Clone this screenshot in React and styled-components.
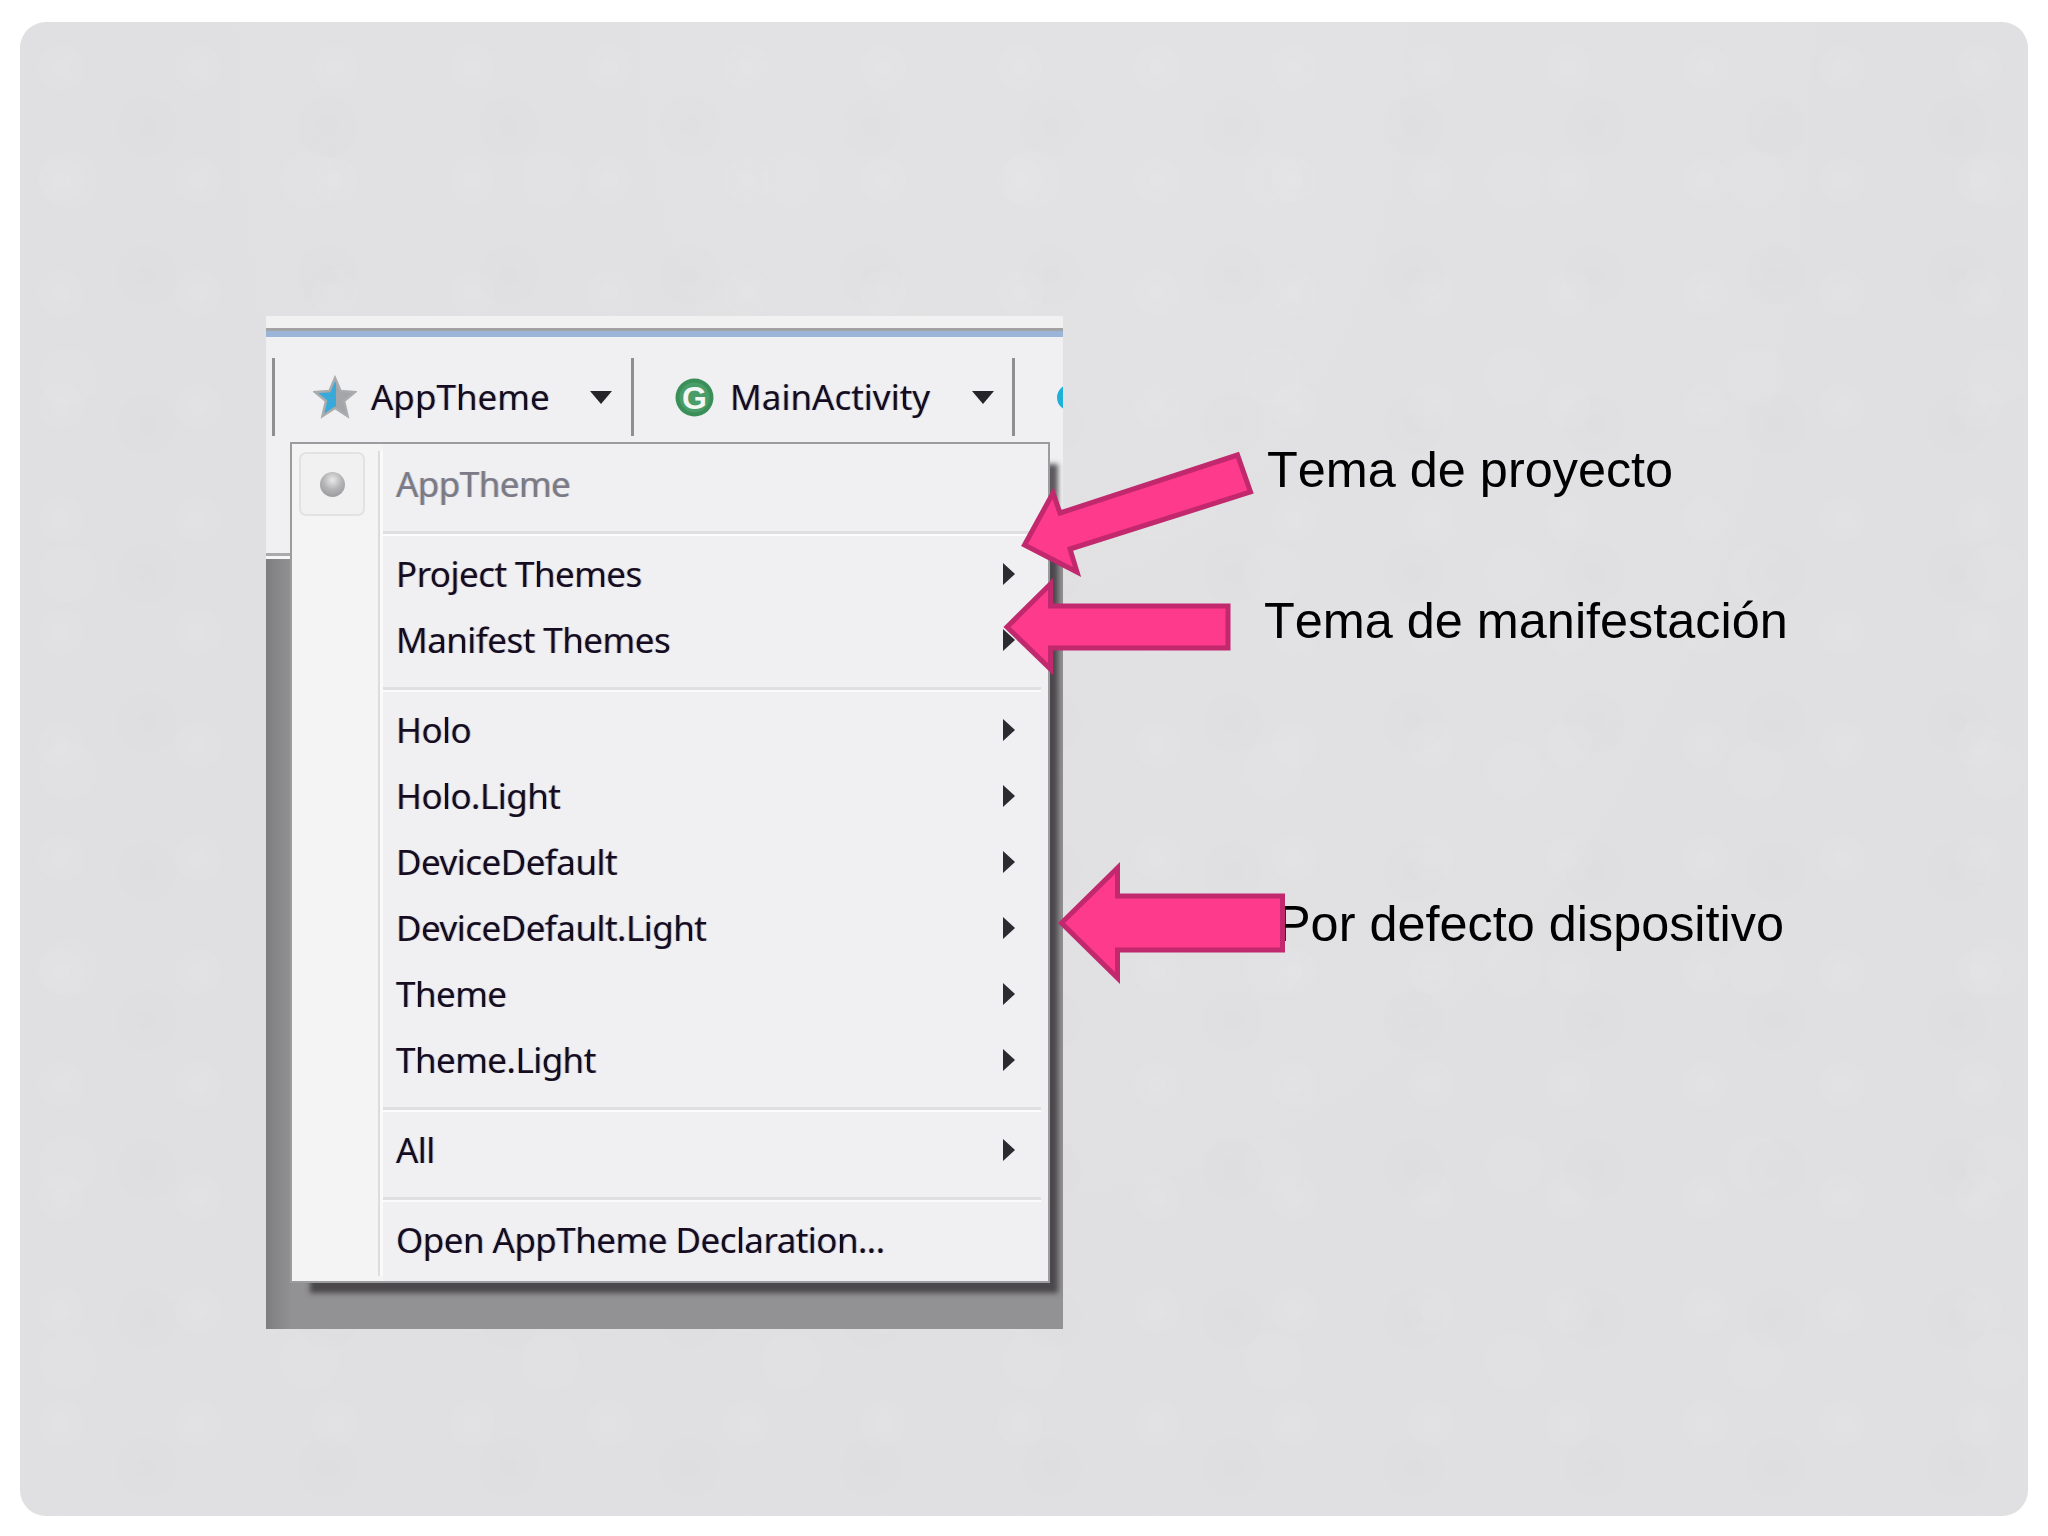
import React from "react";
import styled, { createGlobalStyle } from "styled-components";

const Global = createGlobalStyle`
  html, body { margin: 0; padding: 0; background: #fff; }
  #root { width: 2048px; height: 1536px; padding: 22px 20px 20px; box-sizing: border-box; }
`;

const Card = styled.main`
  position: relative;
  display: flex;
  align-items: flex-start;
  height: 100%;
  box-sizing: border-box;
  padding: 294px 0 0 246px;
  border-radius: 26px;
  overflow: hidden;
  background-color: #e0e0e2;
  background-image:
    radial-gradient(circle at 30% 40%, rgba(255,255,255,.07), transparent 30px),
    radial-gradient(circle at 70% 70%, rgba(0,0,0,.008), transparent 40px),
    radial-gradient(circle at 20% 80%, rgba(255,255,255,.05), transparent 44px),
    radial-gradient(ellipse at 50% 0%, rgba(255,255,255,.08), transparent 70%);
  background-size: 137px 113px, 181px 149px, 241px 197px, 100% 100%;
`;

const Shot = styled.section`
  width: 797px;
  height: 1013px;
  flex-shrink: 0;
  overflow: hidden;
  font-family: "Noto Sans", "Open Sans", sans-serif;
  background:
    linear-gradient(to bottom,
      #f1f1f2 0 12px, #a2a2a4 12px 15px, #9ab5d8 15px 21px,
      #f0f0f2 21px 237px, #aaaaac 237px 240px, #f6f6f6 240px 243px, transparent 243px),
    linear-gradient(to right, #7e7e80, #929193 26px);
`;

const Toolbar = styled.div`
  display: flex;
  align-items: center;
  height: 78px;
  margin-top: 42px;
  padding: 0 0 6px 6px;
`;

const ToolSep = styled.span`
  flex-shrink: 0;
  width: 3px;
  height: 78px;
  background: #8f8f90;
`;

const ToolItem = styled.div`
  display: flex;
  align-items: center;
  flex-shrink: 0;
  box-sizing: border-box;
  width: ${(p) => p.$width}px;
  padding-left: ${(p) => p.$inset}px;
  gap: ${(p) => p.$gap}px;
`;

const fringe = `
  text-shadow: -1px 0 0 rgba(232, 150, 40, .38), 1px 0 0 rgba(40, 140, 240, .42);
  filter: blur(.35px);
`;

const ToolLabel = styled.span`
  font-size: 35px;
  line-height: 44px;
  white-space: nowrap;
  color: #160c22;
  ${fringe}
`;

const Caret = styled.span`
  margin-left: auto;
  margin-right: ${(p) => p.$right}px;
  width: 0;
  height: 0;
  border-left: 11px solid transparent;
  border-right: 11px solid transparent;
  border-top: 13px solid #25252a;
`;

const Peek = styled.span`
  flex-shrink: 0;
  width: 28px;
  height: 27px;
  margin-left: 42px;
  border-radius: 50%;
  background: #1fb0da;
  filter: blur(.6px);
`;

const Menu = styled.nav`
  display: flex;
  box-sizing: border-box;
  width: 760px;
  height: 841px;
  margin-left: 24px;
  border: 2px solid #9c9c9e;
  background: #f4f4f5;
  box-shadow: 14px 16px 5px -6px rgba(58, 56, 60, .82);
`;

const Gutter = styled.div`
  flex-shrink: 0;
  width: 86px;
  box-sizing: border-box;
  padding: 8px 0 0 7px;
`;

const RadioBox = styled.div`
  display: flex;
  align-items: center;
  justify-content: center;
  box-sizing: border-box;
  width: 66px;
  height: 64px;
  border: 2px solid #e2e2e3;
  border-radius: 7px;
  background: #f1f1f2;
`;

const RadioDot = styled.span`
  width: 25px;
  height: 25px;
  border-radius: 50%;
  background: radial-gradient(circle at 50% 32%, #e9e9e9 0, #b4b4b6 45%, #8f8f92 100%);
`;

const GutterRule = styled.span`
  flex-shrink: 0;
  width: 3px;
  margin: 7px 0 5px;
  border-left: 2px solid #dcdcde;
  background: #fafafa;
`;

const Pane = styled.div`
  flex: 1;
  box-sizing: border-box;
  padding: 7px 0 0;
  background: #f0eff2;
`;

const Row = styled.div`
  display: flex;
  align-items: center;
  justify-content: space-between;
  height: 66px;
  padding: 0 33px 0 13px;
`;

const RowLabel = styled.span`
  font-size: 35px;
  line-height: 44px;
  letter-spacing: -.55px;
  white-space: nowrap;
  color: ${(p) => (p.$muted ? "#7d7a88" : "#160c22")};
  ${fringe}
`;

const SubArrow = styled.span`
  width: 0;
  height: 0;
  border-top: 11px solid transparent;
  border-bottom: 11px solid transparent;
  border-left: 12px solid #2a2a30;
`;

const Divider = styled.div`
  height: 3px;
  margin: 14px 7px 5px 0;
  background: #dfdfe1;
  border-bottom: 2px solid #fbfbfc;
`;

const Notes = styled.div`
  display: flex;
  flex-direction: column;
  align-items: flex-start;
`;

const Note = styled.p`
  margin: ${(p) => p.$top}px 0 0 ${(p) => p.$left}px;
  font-family: "Liberation Sans", Arial, sans-serif;
  font-size: 50.4px;
  font-kerning: none;
  line-height: 60px;
  white-space: nowrap;
  color: #000;
`;

const ArrowSvg = styled.svg`
  position: absolute;
  left: 0;
  top: 0;
  pointer-events: none;
`;

const Pointer = ({ points }) => (
  <polygon points={points} fill="#fd3a8b" stroke="#c1286d" strokeWidth="5" strokeLinejoin="miter" strokeMiterlimit="6" />
);

const StarIcon = () => (
  <svg width="44" height="44" viewBox="0 0 44 44">
    <defs>
      <linearGradient id="starFill" x1="0" x2="1" y1="0" y2="0">
        <stop offset="0.52" stopColor="#38a9d9" />
        <stop offset="0.52" stopColor="#a3a5a8" />
      </linearGradient>
    </defs>
    <polygon
      points="22,3 27.5,16 42,17 31,26 34.5,41 22,33 9.5,41 13,26 2,17 16.5,16"
      fill="url(#starFill)"
      stroke="#a9abad"
      strokeWidth="2.5"
    />
  </svg>
);

const ClassIcon = () => (
  <svg width="39" height="39" viewBox="0 0 39 39">
    <circle cx="19.5" cy="19.5" r="19" fill="#3a8f58" />
    <circle cx="19.5" cy="19.5" r="15" fill="#4a9d68" />
    <text x="19.5" y="31" textAnchor="middle" fontFamily="Liberation Sans" fontWeight="700" fontSize="32" fill="#f2f7f3">
      G
    </text>
  </svg>
);

const first = ["Project Themes", "Manifest Themes"];
const second = ["Holo", "Holo.Light", "DeviceDefault", "DeviceDefault.Light", "Theme", "Theme.Light"];

const Item = ({ label }) => (
  <Row>
    <RowLabel>{label}</RowLabel>
    <SubArrow />
  </Row>
);

export default function App() {
  return (
    <>
      <Global />
      <Card>
        <Shot>
          <Toolbar>
            <ToolSep />
            <ToolItem $width={356} $inset={38} $gap={14}>
              <StarIcon />
              <ToolLabel>AppTheme</ToolLabel>
              <Caret $right={19} />
            </ToolItem>
            <ToolSep />
            <ToolItem $width={378} $inset={41} $gap={16}>
              <ClassIcon />
              <ToolLabel>MainActivity</ToolLabel>
              <Caret $right={18} />
            </ToolItem>
            <ToolSep />
            <Peek />
          </Toolbar>
          <Menu>
            <Gutter>
              <RadioBox>
                <RadioDot />
              </RadioBox>
            </Gutter>
            <GutterRule />
            <Pane>
              <Row>
                <RowLabel $muted>AppTheme</RowLabel>
              </Row>
              <Divider />
              {first.map((t) => (
                <Item key={t} label={t} />
              ))}
              <Divider />
              {second.map((t) => (
                <Item key={t} label={t} />
              ))}
              <Divider />
              <Item label="All" />
              <Divider />
              <Row>
                <RowLabel>Open AppTheme Declaration...</RowLabel>
              </Row>
            </Pane>
          </Menu>
        </Shot>
        <Notes>
          <Note $top={124} $left={204}>Tema de proyecto</Note>
          <Note $top={91} $left={201}>Tema de manifestación</Note>
          <Note $top={243} $left={214}>Por defecto dispositivo</Note>
        </Notes>
        <ArrowSvg width="2008" height="1494" viewBox="20 22 2008 1494">
          <Pointer points="1024.5,545 1053,493 1060,513 1237.5,455 1250.5,492 1070,549 1077,572" />
          <Pointer points="1007,627 1050.5,584 1050.5,606 1228,606 1228,648 1050.5,648 1050.5,669" />
          <Pointer points="1061.5,923 1117.5,868 1117.5,896 1282.5,896 1282.5,950 1117.5,950 1117.5,978" />
        </ArrowSvg>
      </Card>
    </>
  );
}
